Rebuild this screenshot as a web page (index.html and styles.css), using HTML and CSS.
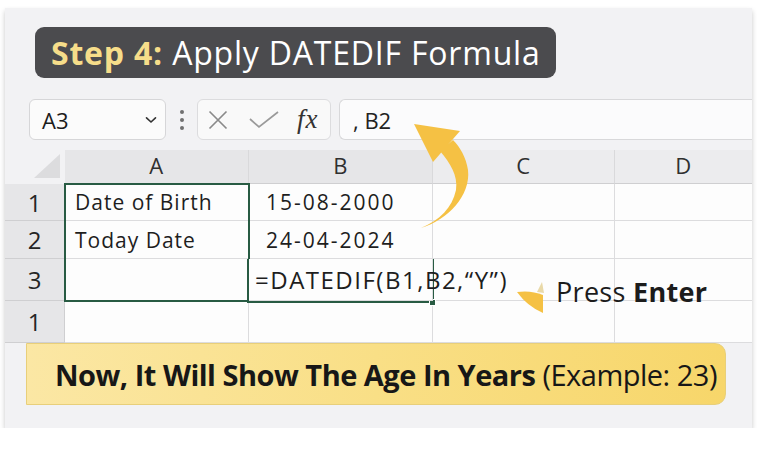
FILE: index.html
```html
<!DOCTYPE html>
<html>
<head>
<meta charset="utf-8">
<link rel="stylesheet" href="styles.css">
</head>
<body>
<div class="card">
  <div class="title"><span class="step">Step 4:</span>&nbsp;Apply DATEDIF Formula</div>

  <div class="fbar">
    <div class="namebox">
      <span>A3</span>
      <svg class="chev" width="12" height="8" viewBox="0 0 12 8"><path d="M1.5 1.8 L6 6 L10.5 1.8" fill="none" stroke="#333" stroke-width="1.6" stroke-linecap="round"/></svg>
    </div>
    <div class="dots"><i></i><i></i><i></i></div>
    <div class="iconbox">
      <svg width="20" height="20" viewBox="0 0 20 20"><path d="M1.5 1.5 L18.5 18.5 M18.5 1.5 L1.5 18.5" stroke="#8a8a8a" stroke-width="1.7"/></svg>
      <svg width="30" height="20" viewBox="0 0 30 20"><path d="M1 9 L10 17 L29 2" fill="none" stroke="#9a9a9a" stroke-width="1.7"/></svg>
      <span class="fx">fx</span>
    </div>
    <div class="formula">, B2</div>
  </div>

  <div class="sheet">
    <div class="corner"><svg width="26" height="24" viewBox="0 0 26 24"><path d="M26 0 L26 24 L0 24 Z" fill="#dcdcde"/></svg></div>
    <div class="ch cha">A</div>
    <div class="ch chb">B</div>
    <div class="ch">C</div>
    <div class="ch chd">D</div>

    <div class="rh">1</div>
    <div class="c ca">Date of Birth</div>
    <div class="c cb">15-08-2000</div>
    <div class="c"></div>
    <div class="c cd"></div>

    <div class="rh">2</div>
    <div class="c ca">Today Date</div>
    <div class="c cb">24-04-2024</div>
    <div class="c"></div>
    <div class="c cd"></div>

    <div class="rh">3</div>
    <div class="c ca"></div>
    <div class="c fcell">=DATEDIF(B1,B2,“Y”)</div>
    <div class="c"></div>
    <div class="c cd enter"><span>Press <b>Enter</b></span></div>

    <div class="rh">1</div>
    <div class="c ca"></div>
    <div class="c"></div>
    <div class="c"></div>
    <div class="c cd"></div>

    <div class="sel-a"></div>
    <div class="sel-b"></div>
    <div class="handle"></div>
  </div>

  <div class="banner"><b>Now, It Will Show The Age In Years</b> <span>(Example: 23)</span></div>

  <svg class="arrows" width="764" height="459" viewBox="0 0 764 459">
    <path d="M421 228 C448 220 471 195 468 170 C466 157 460 147 453 140 L440 151 C450 163 458 175 456 190 C452 208 440 220 421 228 Z" fill="#f5c144"/>
    <path d="M414 124 L460 131 L433 162 Z" fill="#f5c144"/>
    <path d="M517 292 Q531 290 543 295 L543 313 Q527 306 517 292 Z" fill="#f5c144"/>
    <path d="M537 292 L542 282 L544 293 Z" fill="#e9d9a8"/>
  </svg>
</div>
</body>
</html>
```

FILE: styles.css
```css
* { box-sizing: border-box; }
html, body { margin: 0; padding: 0; background: #ffffff; }
body { font-family: "Open Sans", "Noto Sans", sans-serif; color: #1e1e1e; }

.card {
  position: relative;
  margin: 8px 0 0 5px;
  width: 747px;
  height: 420px;
  background: #f2f2f4;
  box-shadow: 0 3px 5px rgba(0,0,0,0.22);
  display: flex;
  flex-direction: column;
}

.title {
  margin: 19px 0 0 30px;
  width: 521px;
  height: 51px;
  background: #4b4b4e;
  border-radius: 9px;
  color: #ffffff;
  font-size: 32px;
  font-weight: 500;
  display: flex;
  align-items: center;
  padding-left: 16px;
  letter-spacing: 0.8px;
  white-space: nowrap;
}
.step { color: #f6dd8a; font-weight: 700; }

.fbar {
  margin-top: 21px;
  height: 41px;
  display: flex;
  align-items: stretch;
}
.namebox {
  margin-left: 24px;
  width: 137px;
  background: #fbfbfb;
  border: 1px solid #d6d6d8;
  border-radius: 6px;
  display: flex;
  align-items: center;
  justify-content: space-between;
  padding: 0 8px 0 12px;
  font-size: 22px;
  color: #1c1c1c;
}
.dots {
  width: 31px;
  display: flex;
  flex-direction: column;
  align-items: center;
  justify-content: center;
  gap: 4px;
}
.dots i { width: 4px; height: 4px; border-radius: 50%; background: #707070; display: block; }
.iconbox {
  width: 134px;
  background: #f9f9f9;
  border: 1px solid #dcdcde;
  border-radius: 6px;
  display: flex;
  align-items: center;
  padding-left: 10px;
}
.iconbox svg:first-child { margin-right: 21px; }
.iconbox svg:nth-child(2) { margin-right: 18px; }
.fx {
  font-family: "Liberation Serif", "DejaVu Serif", serif;
  font-style: italic;
  font-size: 27px;
  color: #333;
  letter-spacing: 1px;
}
.formula {
  margin-left: 8px;
  flex: 1;
  background: #fbfbfc;
  border: 1px solid #d8d8da;
  border-right: none;
  border-radius: 6px 0 0 6px;
  display: flex;
  align-items: center;
  padding-left: 13px;
  font-size: 22px;
  color: #222;
}

.sheet {
  position: relative;
  margin-top: 10px;
  display: grid;
  grid-template-columns: 60px 184px 184px 182px 137px;
  grid-template-rows: 34px 37px 38px 42px 42px;
  font-size: 21px;
}
.corner {
  display: flex;
  align-items: flex-end;
  justify-content: flex-end;
  padding: 0 5px 6px 0;
}
.ch {
  background: #ececee;
  border-right: 1px solid #d9d9db;
  border-bottom: 1px solid #cfcfd1;
  display: flex;
  align-items: center;
  justify-content: center;
  color: #303030;
  font-size: 22px;
  letter-spacing: 0.5px;
  padding-bottom: 3px;
}
.cha, .chb { background: #e6e6e8; }
.chd { border-right: none; }
.rh {
  background: #e6e6e8;
  border-bottom: 1px solid #cfcfd1;
  border-right: 1px solid #cfcfd1;
  display: flex;
  align-items: center;
  justify-content: center;
  font-size: 24px;
  color: #252525;
}
.c {
  background: #fdfdfd;
  border-right: 1px solid #dcdcde;
  border-bottom: 1px solid #dcdcde;
  display: flex;
  align-items: center;
  white-space: nowrap;
  color: #1e1e1e;
}
.ca { padding-left: 10px; letter-spacing: 1px; }
.cb { padding-left: 17px; letter-spacing: 2px; }
.cd { border-right: none; }
.fcell {
  padding-left: 6px;
  font-size: 24px;
  letter-spacing: 1.5px;
  overflow: visible;
  position: relative;
  z-index: 2;
}
.enter {
  overflow: visible;
  position: relative;
}
.enter span {
  position: absolute;
  left: -59px;
  top: 14px;
  font-size: 27px;
  color: #1c1c1c;
  letter-spacing: 0.3px;
}
.enter b { font-weight: 700; }

.sel-a {
  position: absolute;
  left: 59px; top: 33px;
  width: 186px; height: 119px;
  border: 2px solid #285b43;
  pointer-events: none;
}
.sel-b {
  position: absolute;
  left: 242px; top: 109px;
  width: 187px; height: 44px;
  border: 2px solid #285b43;
}
.handle {
  position: absolute;
  left: 424px; top: 149px;
  width: 7px; height: 7px;
  background: #285b43;
  border: 1px solid #fff;
}

.banner {
  margin-left: 21px;
  width: 700px;
  height: 62px;
  background: linear-gradient(90deg, #fbe7a4 0%, #f9df86 50%, #f7d66a 100%);
  border: 1px solid #e8cf7a;
  border-radius: 0 11px 11px 0;
  display: flex;
  align-items: center;
  padding-left: 28px;
  font-size: 29px;
  color: #171717;
  white-space: nowrap;
  letter-spacing: -0.5px;
  font-stretch: 92%;
}
.banner b { font-weight: 700; }
.banner span { font-weight: 400; margin-left: 7px; }

.arrows {
  position: absolute;
  left: -5px;
  top: -8px;
  pointer-events: none;
  z-index: 5;
}
```
